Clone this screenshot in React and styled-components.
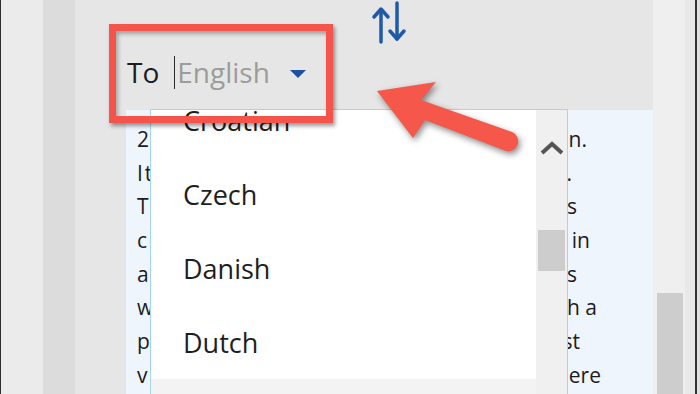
import React, { useLayoutEffect, useRef } from "react";
import styled, { createGlobalStyle } from "styled-components";

const Global = createGlobalStyle`
  html, body {
    margin: 0;
    padding: 0;
    width: 700px;
    height: 394px;
    overflow: hidden;
    background: #e6e6e6;
    font-family: "Open Sans", "Noto Sans", sans-serif;
  }
`;

const Screen = styled.div`
  position: relative;
  display: flex;
  width: 700px;
  height: 394px;
  overflow: hidden;
`;

const Strip = styled.div`
  flex: 0 0 ${(p) => p.$w}px;
  background: ${(p) => p.$c};
`;

const Main = styled.div`
  flex: 0 0 578px;
  display: flex;
  flex-direction: column;
  background: #e6e6e6;
`;

const Header = styled.div`
  flex: 0 0 110px;
  display: flex;
  flex-direction: column;
`;

const Swap = styled.svg`
  margin-left: 295px;
  width: 40px;
  height: 44px;
`;

const LangRow = styled.div`
  display: flex;
  align-items: center;
  margin: 10px 0 0 52px;
  height: 36px;
  font-size: 28px;
`;

const Label = styled.span`
  color: #1b1b1b;
`;

const Field = styled.span`
  display: flex;
  align-items: center;
  margin-left: 15px;
  color: #9c9c9c;
`;

const Caret = styled.span`
  width: 1px;
  height: 33px;
  background: #2a2a2a;
  margin-right: 2px;
`;

const Drop = styled.span`
  margin-left: 20px;
  width: 0;
  height: 0;
  border-left: 8px solid transparent;
  border-right: 8px solid transparent;
  border-top: 8px solid #1f4f9f;
  margin-top: 3px;
`;

const Pane = styled.div`
  flex: 1;
  margin-left: 51px;
  padding: 13px 0 0 11px;
  background: #eef5fd;
  font-size: 21px;
  color: #1c1c1c;
`;

const Line = styled.div`
  display: flex;
  justify-content: space-between;
  height: 33.7px;
  line-height: 33.7px;
  white-space: nowrap;
  padding-right: ${(p) => p.$pr}px;
`;

const Start = styled.span`
  letter-spacing: 2px;
`;

const Track = styled.div`
  flex: 0 0 32px;
  background: #efefef;
  padding: 293px 2px 0 4px;
  box-sizing: border-box;
`;

const Thumb = styled.div`
  height: ${(p) => p.$h}px;
  background: #cdcdcd;
`;

const Menu = styled.div`
  position: absolute;
  left: 150px;
  top: 109px;
  width: 418px;
  height: 300px;
  box-sizing: border-box;
  border: 1px solid #a3d5ec;
  background: #fff;
  display: flex;
`;

const List = styled.div`
  flex: 1;
  overflow: hidden;
`;

const Item = styled.div`
  height: 74px;
  display: flex;
  align-items: center;
  padding-left: 32px;
  font-size: 27px;
  color: #1e1e1e;
  background: ${(p) => (p.$selected ? "#f3f3f3" : "#fff")};
`;

const MenuBar = styled.div`
  flex: 0 0 31px;
  background: #f0f0f0;
  display: flex;
  flex-direction: column;
  align-items: center;
`;

const UpBtn = styled.div`
  height: 76px;
  display: flex;
  align-items: center;
  justify-content: center;
`;

const MenuThumb = styled.div`
  margin-top: 44px;
  width: 27px;
  height: 41px;
  background: #cdcdcd;
`;

const Callout = styled.div`
  position: absolute;
  left: 109px;
  top: 24px;
  width: 224px;
  height: 99px;
  box-sizing: border-box;
  border: 7px solid #f4544a;
  box-shadow: 2px 3px 4px rgba(0, 0, 0, 0.4), inset 2px 3px 4px rgba(0, 0, 0, 0.3);
`;

const Overlay = styled.svg`
  position: absolute;
  left: 0;
  top: 0;
  width: 700px;
  height: 394px;
  pointer-events: none;
  filter: drop-shadow(2px 3px 3px rgba(0, 0, 0, 0.45));
`;

const lines = [
  ["2020 was a year of", "disruption.", 66],
  ["It", "changed how we work.", 81],
  ["The", "needs of businesses", 76],
  ["companies", "working in", 63],
  ["and", "new tools", 76],
  ["with", "faced with a", 56],
  ["people", "than the past", 73],
  ["via", "from anywhere", 52],
];

const languages = [
  "Chinese Simplified",
  "Chinese Traditional",
  "Croatian",
  "Czech",
  "Danish",
  "Dutch",
  "English",
  "Estonian",
];

const App = () => {
  const listRef = useRef(null);

  useLayoutEffect(() => {
    if (listRef.current) listRef.current.scrollTop = 175;
  }, []);

  return (
    <Screen>
      <Global />
      <Strip $w={1} $c="#2e2e2e" />
      <Strip $w={42} $c="#ebebeb" />
      <Strip $w={32} $c="#dcdcdc" />
      <Main>
        <Header>
          <Swap viewBox="0 0 40 44">
            <g fill="none" stroke="#1f5aa8" strokeWidth="3.5" strokeLinecap="round" strokeLinejoin="round">
              <line x1="11" y1="10" x2="11" y2="42" />
              <polyline points="4,17 11,9 18,17" />
              <line x1="27" y1="3" x2="27" y2="39" />
              <polyline points="20,31 27,39 34,31" />
            </g>
          </Swap>
          <LangRow>
            <Label>To</Label>
            <Field>
              <Caret />
              English
            </Field>
            <Drop />
          </LangRow>
        </Header>
        <Pane>
          {lines.map(([start, end, pr]) => (
            <Line key={start} $pr={pr}>
              <Start>{start}</Start>
              <span>{end}</span>
            </Line>
          ))}
        </Pane>
      </Main>
      <Track>
        <Thumb $h={120} />
      </Track>
      <Strip $w={10} $c="#e8e8e8" />
      <Strip $w={2} $c="#333" />
      <Strip $w={3} $c="#e0e0e0" />

      <Menu>
        <List ref={listRef}>
          {languages.map((l) => (
            <Item key={l} $selected={l === "English"}>
              {l}
            </Item>
          ))}
        </List>
        <MenuBar>
          <UpBtn>
            <svg width="26" height="16" viewBox="0 0 26 16">
              <polyline points="3,13 13,4 23,13" fill="none" stroke="#555" strokeWidth="4" />
            </svg>
          </UpBtn>
          <MenuThumb />
        </MenuBar>
      </Menu>

      <Callout />
      <Overlay viewBox="0 0 700 394">
        <path
          d="M377,91 L436,82 L421,100 L512,132 A10,10 0 0 1 506,151 L425,120 L413,138 Z"
          fill="#f5574a"
          strokeLinejoin="round"
        />
      </Overlay>
    </Screen>
  );
};

export default App;
